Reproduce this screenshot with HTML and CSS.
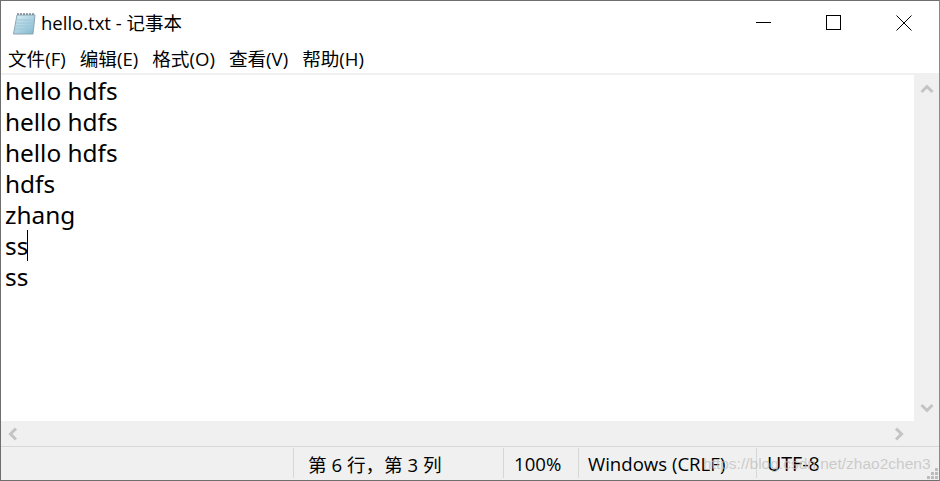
FILE: index.html
```html
<!DOCTYPE html>
<html lang="zh-CN">
<head>
<meta charset="utf-8">
<title>hello.txt - 记事本</title>
<link rel="stylesheet" href="styles.css">
</head>
<body>
<div class="window">
  <header class="titlebar">
    <svg class="app-icon" width="24" height="24" viewBox="0 0 24 24">
      <defs><linearGradient id="pg" x1="0" y1="0" x2="1" y2="1"><stop offset="0" stop-color="#dff0f6"/><stop offset="1" stop-color="#7db7ce"/></linearGradient></defs>
      <path d="M5 4H23L21 23H1.5Z" fill="url(#pg)" stroke="#8aa6b2" stroke-width="1"/>
      <path d="M4.6 9H21.6M4.1 12H21.3M3.6 15H21M3.1 18H20.7" stroke="#9cc6d6" stroke-width="1" fill="none"/>
      <path d="M6 4V2M9 4V2M12 4V2M15 4V2M18 4V2M21 4V2" stroke="#6d7f88" stroke-width="1.4" fill="none"/>
    </svg>
    <span class="title">hello.txt - 记事本</span>
    <div class="controls">
      <button class="ctl"><svg width="16" height="16" viewBox="0 0 16 16"><path d="M0 7.5H15" stroke="#000" fill="none"/></svg></button>
      <button class="ctl"><svg width="16" height="16" viewBox="0 0 16 16"><rect x="0.5" y="0.5" width="14" height="14" stroke="#000" fill="none"/></svg></button>
      <button class="ctl"><svg width="16" height="16" viewBox="0 0 16 16"><path d="M0.5 0.5L15.5 15.5M15.5 0.5L0.5 15.5" stroke="#000" fill="none"/></svg></button>
    </div>
  </header>
  <nav class="menubar">
    <span>文件(F)</span><span>编辑(E)</span><span>格式(O)</span><span>查看(V)</span><span>帮助(H)</span>
  </nav>
  <div class="middle">
    <main class="editor">
      <div class="line">hello hdfs</div>
      <div class="line">hello hdfs</div>
      <div class="line">hello hdfs</div>
      <div class="line">hdfs</div>
      <div class="line">zhang</div>
      <div class="line">ss<i class="caret"></i></div>
      <div class="line">ss</div>
    </main>
    <aside class="vscroll">
      <svg width="14" height="10" viewBox="0 0 14 10"><path d="M1.5 8L7 2.5L12.5 8" stroke="#c4c4c4" stroke-width="3" fill="none"/></svg>
      <svg width="14" height="10" viewBox="0 0 14 10"><path d="M1.5 2L7 7.5L12.5 2" stroke="#c4c4c4" stroke-width="3" fill="none"/></svg>
    </aside>
  </div>
  <div class="hscroll">
    <svg width="10" height="14" viewBox="0 0 10 14"><path d="M8 1.5L2.5 7L8 12.5" stroke="#c4c4c4" stroke-width="3" fill="none"/></svg>
    <svg width="10" height="14" viewBox="0 0 10 14"><path d="M2 1.5L7.5 7L2 12.5" stroke="#c4c4c4" stroke-width="3" fill="none"/></svg>
  </div>
  <footer class="statusbar">
    <div class="cell cell-pos">第 6 行，第 3 列</div>
    <div class="cell cell-zoom">100%</div>
    <div class="cell cell-eol">Windows (CRLF)</div>
    <div class="cell cell-enc">UTF-8</div>
    <svg class="grip" width="12" height="12" viewBox="0 0 12 12"><path d="M8 0h3v3H8zM4 4h3v3H4zM8 4h3v3H8zM0 8h3v3H0zM4 8h3v3H4zM8 8h3v3H8z" fill="#bdbdbd"/></svg>
  </footer>
  <div class="watermark">https://blog.csdn.net/zhao2chen3</div>
</div>
</body>
</html>
```
FILE: styles.css
```css
* { box-sizing: border-box; }
html, body { margin: 0; padding: 0; }
body { width: 940px; height: 481px; overflow: hidden; background: #fff; }
.window {
  position: relative;
  width: 940px;
  height: 481px;
  display: flex;
  flex-direction: column;
  border: 1px solid #6e6e6e;
  border-right-color: #8a8a8a;
  font-family: "Open Sans", "Noto Sans CJK SC", sans-serif;
  color: #000;
  background: #fff;
}
.titlebar { height: 45px; flex: none; display: flex; align-items: center; padding: 0 0 0 11px; }
.app-icon { flex: none; margin-right: 5px; margin-top: -1px; }
.title { font-size: 18.5px; line-height: 24px; margin-top: -1px; }
.controls { margin-left: auto; display: flex; align-self: flex-start; margin-top: 2px; }
.ctl { width: 70px; height: 40px; padding: 0; border: 0; background: none; display: flex; align-items: center; justify-content: center; }
.menubar { height: 29px; flex: none; display: flex; gap: 14px; padding: 0 0 5px 7px; align-items: center; font-size: 18.6px; border-bottom: 2px solid #f0f0f0; }
.middle { flex: 1; min-height: 0; display: flex; }
.editor { flex: 1; min-width: 0; padding-left: 4px; font-size: 24.4px; line-height: 31px; font-family: "Noto Sans", "Noto Sans CJK SC", sans-serif; }
.line { height: 31px; white-space: pre; }
.caret { display: inline-block; width: 1px; height: 31px; margin-left: -1px; background: #000; vertical-align: top; }
.vscroll { width: 25px; flex: none; background: #f0f0f0; display: flex; flex-direction: column; justify-content: space-between; align-items: center; padding: 9px 0 8px; }
.hscroll { height: 26px; flex: none; background: #f0f0f0; display: flex; justify-content: space-between; align-items: center; padding: 0 35px 0 7px; border-bottom: 1px solid #d7d7d7; }
.statusbar { height: 33px; flex: none; display: flex; background: #f0f0f0; position: relative; font-size: 18.6px; padding: 1px 0 2px; }
.cell { display: flex; align-items: center; border-left: 1px solid #d7d7d7; white-space: pre; }
.cell-pos { margin-left: 292px; width: 210px; padding-left: 14px; }
.cell-zoom { width: 75px; padding-left: 10px; }
.cell-eol { width: 178px; padding-left: 9px; }
.cell-enc { flex: 1; padding-left: 10px; font-size: 19.6px; }
.grip { position: absolute; right: 0; bottom: 0; }
.watermark { position: absolute; left: 702px; top: 454px; font-family: "Liberation Sans", sans-serif; font-size: 15.5px; color: rgba(190,190,190,.75); white-space: pre; }
```
